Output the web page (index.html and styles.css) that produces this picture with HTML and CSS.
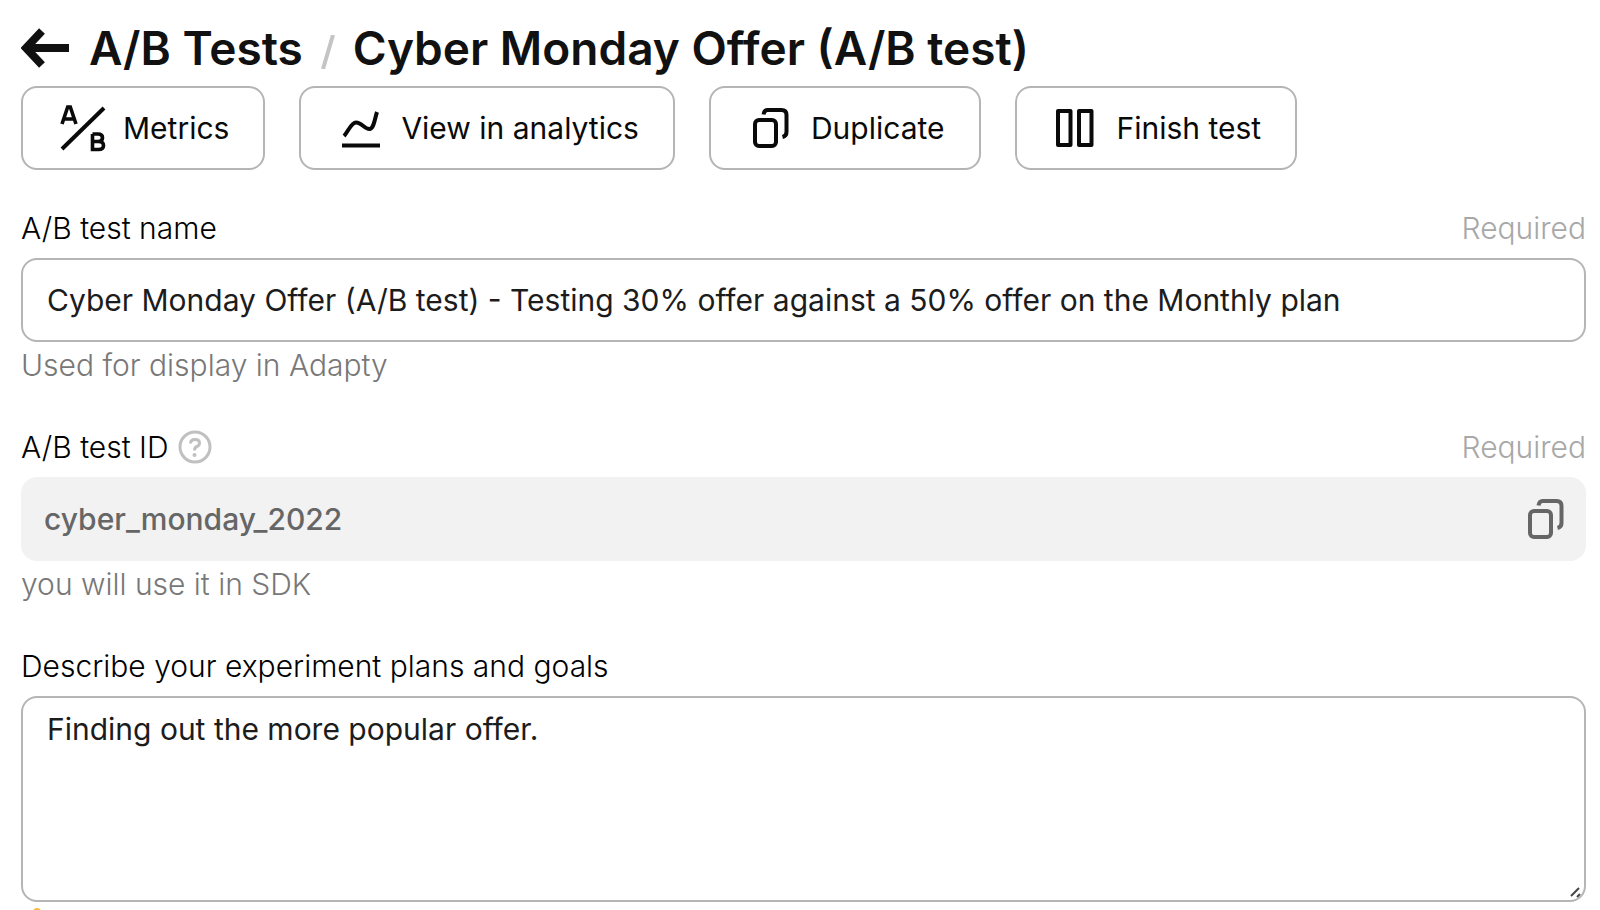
FILE: index.html
```html
<!DOCTYPE html>
<html lang="en">
<head>
<meta charset="utf-8">
<title>Cyber Monday Offer (A/B test)</title>
<link rel="stylesheet" href="styles.css">
</head>
<body>
<svg class="sprite" aria-hidden="true">
  <symbol id="copy" viewBox="0 0 48 48">
    <rect x="8" y="16" width="21" height="26" rx="4"/>
    <path d="M16.500 10.500C17 7.500 18 6 20.500 6H34.500Q39.500 6 39.500 11V28Q39.500 32 35.500 33"/>
  </symbol>
</svg>
<main class="page">
  <nav class="crumbs">
    <a class="back" href="#" aria-label="Back">
      <svg class="back-icon" viewBox="0 0 48 40"><path d="M48 20H6M21 3L5 20L21 37"/></svg>
    </a>
    <a class="crumb" href="#">A/B Tests</a>
    <svg class="slash" viewBox="0 0 14 34" aria-hidden="true"><path d="M12 0L2 34"/></svg>
    <h1 class="title">Cyber Monday Offer (A/B test)</h1>
  </nav>

  <div class="actions">
    <button class="action" type="button">
      <svg class="icon" viewBox="0 0 48 48"><path d="M3 45L45 4"/><g class="letters"><path d="M3 20L8.700 3H11.300L17 20M5.500 15H14.500"/><path d="M33.500 30V45.500H39.500Q44.500 45.500 44.500 41.500Q44.500 37.500 39.500 37.500H33.500M39 37.500Q43.500 37.500 43.500 33.700Q43.500 30 39 30H33.500"/></g></svg>
      Metrics
    </button>
    <button class="action" type="button">
      <svg class="icon" viewBox="0 0 48 48"><path d="M7 32C11 28 14 18.500 19 18.500C25 18.500 28 26 33 25C37 24 38 14 40 8M5 41.500H43"/></svg>
      View in analytics
    </button>
    <button class="action" type="button">
      <svg class="icon"><use href="#copy"/></svg>
      Duplicate
    </button>
    <button class="action" type="button">
      <svg class="icon round" viewBox="0 0 48 48"><path d="M5 7H17.500V41H5ZM26 7H38.500V41H26Z"/></svg>
      Finish test
    </button>
  </div>

  <form class="form">
    <div class="field">
      <div class="field-head">
        <label class="label" for="test-name">A/B test name</label>
        <span class="required">Required</span>
      </div>
      <input class="control" id="test-name" type="text" value="Cyber Monday Offer (A/B test) - Testing 30% offer against a 50% offer on the Monthly plan">
      <p class="help">Used for display in Adapty</p>
    </div>

    <div class="field">
      <div class="field-head">
        <div class="label-group">
          <label class="label" for="test-id">A/B test ID</label>
          <svg class="hint" viewBox="0 0 34 34" role="img" aria-label="Help"><circle cx="17" cy="17" r="15"/><path d="M12.500 13.500Q12.500 9.500 17 9.500Q21.500 9.500 21.500 13Q21.500 15.500 19 16.500Q16.500 17.500 16.500 20.500"/><circle class="dot" cx="16.500" cy="25" r="2"/></svg>
        </div>
        <span class="required">Required</span>
      </div>
      <div class="readonly">
        <input class="readonly-input" id="test-id" type="text" value="cyber_monday_2022" readonly>
        <button class="copy" type="button" aria-label="Copy"><svg class="icon"><use href="#copy"/></svg></button>
      </div>
      <p class="help">you will use it in SDK</p>
    </div>

    <div class="field">
      <div class="field-head">
        <label class="label" for="plans">Describe your experiment plans and goals</label>
      </div>
      <div class="area-wrap">
        <textarea class="control area" id="plans">Finding out the more popular offer.</textarea>
        <svg class="grip" viewBox="0 0 12 12" aria-hidden="true"><path d="M1 10L9 2M7 11L10 8"/></svg>
      </div>
      <div class="note"><span class="note-dot"></span></div>
    </div>
  </form>
</main>
</body>
</html>
```
FILE: styles.css
```css
* {
  box-sizing: border-box;
}

body {
  margin: 0;
  height: 100vh;
  overflow: hidden;
  background: #fff;
  color: #111;
  font: 400 30px/36px Inter, "Liberation Sans", sans-serif;
}

svg {
  flex: none;
  fill: none;
  stroke: currentColor;
}

.sprite {
  position: absolute;
  width: 0;
  height: 0;
}

.page {
  padding: 20px 14px 0 21px;
}

.crumbs {
  display: flex;
  align-items: center;
  margin-bottom: 10px;
  font-size: 46px;
  line-height: 56px;
  font-weight: 600;
}

.back,
.crumb {
  color: inherit;
  text-decoration: none;
}

.back {
  display: flex;
  margin-right: 20px;
}

.back-icon {
  width: 48px;
  height: 40px;
  stroke-width: 8;
}

.slash {
  width: 14px;
  height: 34px;
  margin: 8px 18px 0;
  color: #c4c4c4;
  stroke-width: 4;
}

.title {
  margin: 0;
  font: inherit;
}

.actions {
  display: flex;
  gap: 34px;
  margin-bottom: 40px;
}

.action {
  display: flex;
  align-items: center;
  gap: 16px;
  height: 84px;
  padding: 0 34px 0 36px;
  border: 2px solid #b5b5b5;
  border-radius: 16px;
  background: #fff;
  color: #0a0a0a;
  font: inherit;
}

.icon {
  width: 48px;
  height: 48px;
  stroke-width: 4;
}

.letters {
  stroke-width: 3.6;
}

.round {
  stroke-linejoin: round;
}

.field {
  margin-bottom: 46px;
}

.field:last-child {
  margin-bottom: 0;
}

.field-head {
  display: flex;
  justify-content: space-between;
  margin-bottom: 12px;
}

.label-group {
  display: flex;
  align-items: center;
  gap: 9px;
}

.label,
.required,
.help {
  font-weight: 300;
}

.label {
  color: #000;
}

.required {
  color: #a8a8a8;
}

.hint {
  width: 34px;
  height: 34px;
  color: #c0c0c0;
  stroke-width: 3;
}

.dot {
  fill: currentColor;
  stroke: none;
}

.control {
  display: block;
  width: 100%;
  height: 84px;
  padding: 0 24px;
  border: 2px solid #b5b5b5;
  border-radius: 16px;
  background: #fff;
  color: #1c1c1c;
  font: inherit;
}

.help {
  margin: 5px 0 0;
  color: #787878;
}

.readonly {
  display: flex;
  align-items: center;
  height: 84px;
  padding: 0 16px 0 23px;
  border-radius: 16px;
  background: #f2f2f2;
  color: #666;
}

.readonly-input {
  flex: 1;
  min-width: 0;
  padding: 0;
  border: 0;
  background: none;
  color: inherit;
  font: inherit;
  font-weight: 500;
}

.copy {
  display: flex;
  padding: 0;
  border: 0;
  background: none;
  color: inherit;
}

.area-wrap {
  position: relative;
}

.area {
  height: 206px;
  padding: 13px 24px;
  resize: none;
}

.grip {
  position: absolute;
  right: 4px;
  bottom: 4px;
  width: 12px;
  height: 12px;
  color: #444;
  stroke-width: 2;
}

.note {
  padding: 6px 12px 0;
}

.note-dot {
  display: block;
  width: 8px;
  height: 8px;
  border-radius: 4px;
  background: #f5b942;
}
```
